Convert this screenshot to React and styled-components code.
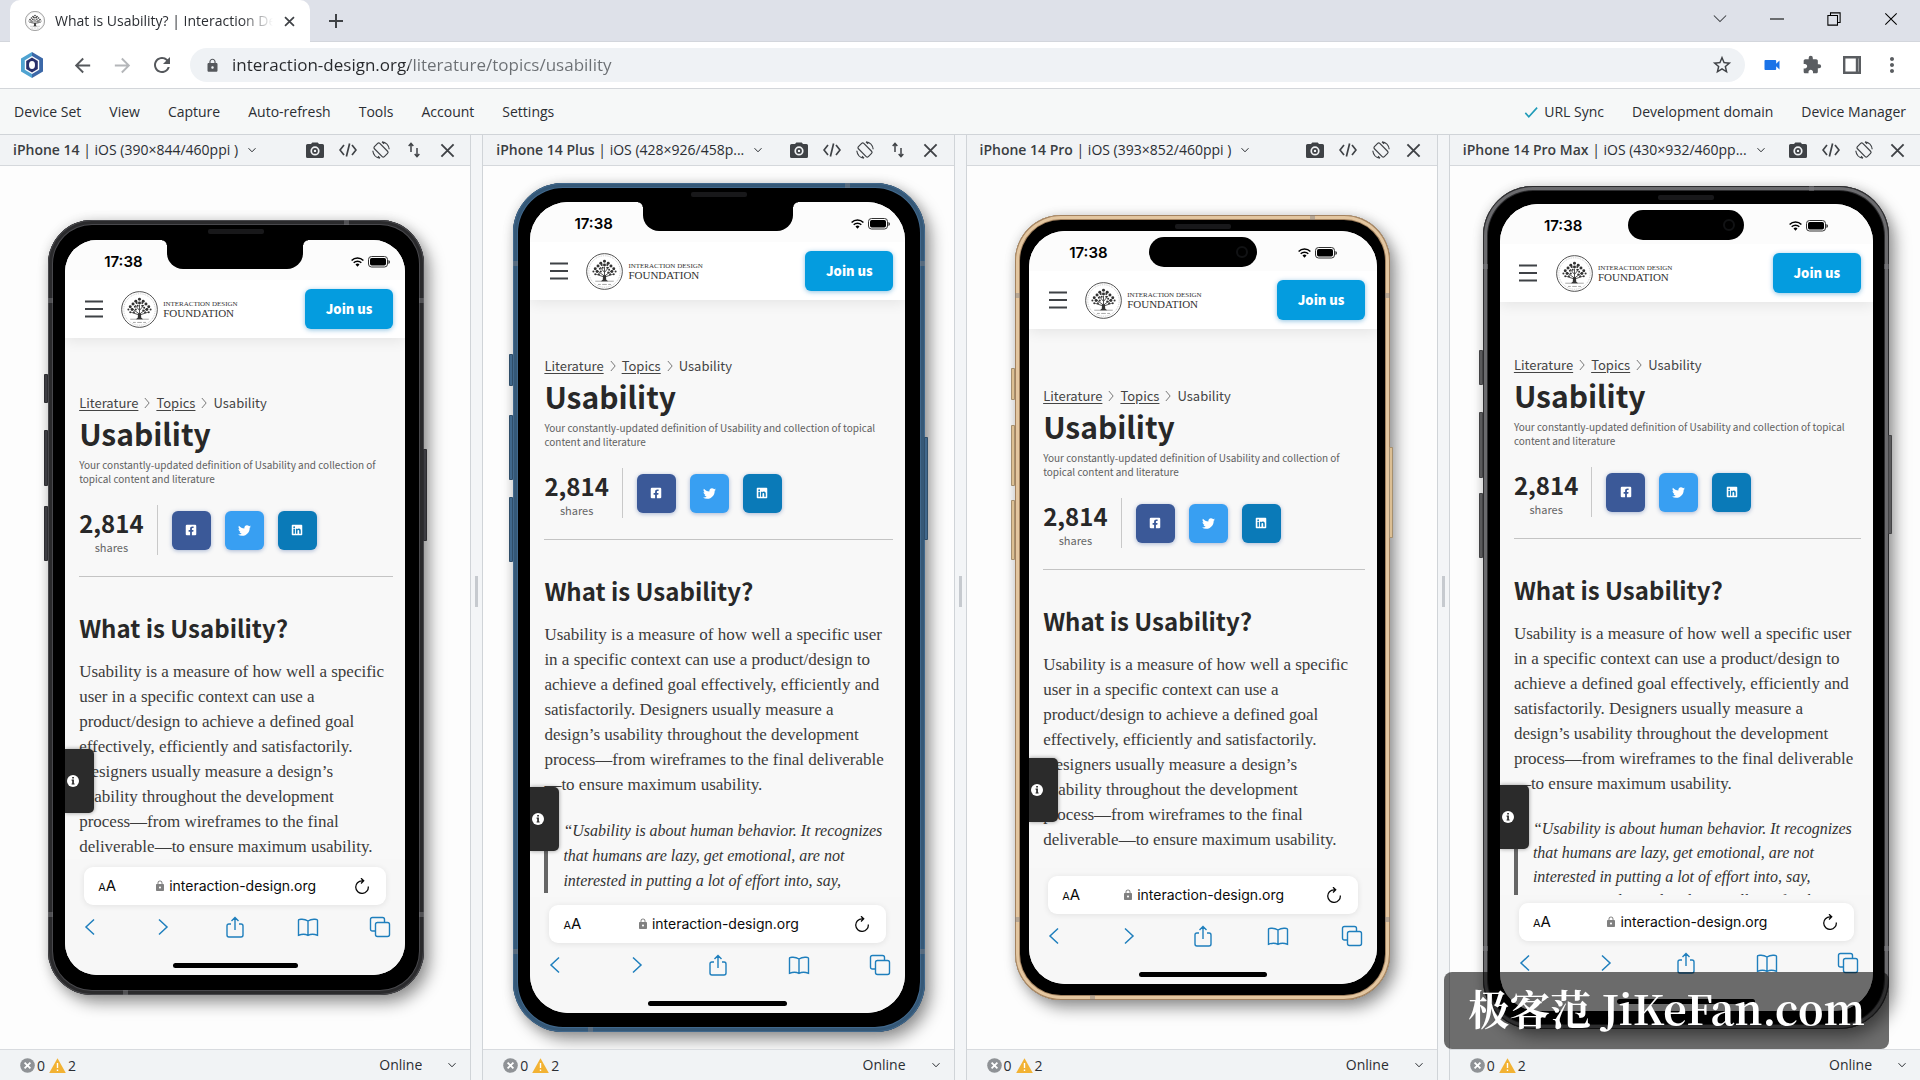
import React from "react";
import styled, { createGlobalStyle, css } from "styled-components";
import {
  MdArrowBack,
  MdArrowForward,
  MdExtension,
  MdLock,
  MdMoreVert,
  MdRefresh,
  MdStarBorder,
  MdVideocam
} from "react-icons/md";
import { FaFacebookSquare, FaLinkedin, FaTwitter } from "react-icons/fa";

const uiFont = `"Open Sans", "Noto Sans", sans-serif`;
const siteFont = `"Noto Sans CJK SC", "Noto Sans", sans-serif`;
const bookFont = `"Liberation Serif", serif`;
const iosFont = `Inter, "Liberation Sans", sans-serif`;

const GlobalStyle = createGlobalStyle`
  *, *::before, *::after {
    box-sizing: border-box;
  }
  body {
    margin: 0;
    font-family: ${uiFont};
    font-size: 14px;
    color: #2b2e33;
    background: #fdfdfd;
  }
  h1, h2, p, blockquote {
    margin: 0;
  }
  button {
    padding: 0;
    border: 0;
    background: none;
    font: inherit;
    color: inherit;
    cursor: pointer;
  }
  svg {
    display: block;
    flex: none;
  }
`;

const narrowPara = [
  "Usability is a measure of how well a specific",
  "user in a specific context can use a",
  "product/design to achieve a defined goal",
  "effectively, efficiently and satisfactorily.",
  "Designers usually measure a design’s",
  "usability throughout the development",
  "process—from wireframes to the final",
  "deliverable—to ensure maximum usability."
];

const widePara = [
  "Usability is a measure of how well a specific user",
  "in a specific context can use a product/design to",
  "achieve a defined goal effectively, efficiently and",
  "satisfactorily. Designers usually measure a",
  "design’s usability throughout the development",
  "process—from wireframes to the final deliverable",
  "—to ensure maximum usability."
];

const quote = [
  "“Usability is about human behavior. It recognizes",
  "that humans are lazy, get emotional, are not",
  "interested in putting a lot of effort into, say,"
];

const narrowIntro = [
  "Your constantly-updated definition of Usability and collection of",
  "topical content and literature"
];

const wideIntro = [
  "Your constantly-updated definition of Usability and collection of topical",
  "content and literature"
];

const devices = [
  {
    name: "iPhone 14",
    spec: "iOS (390×844/460ppi )",
    swap: true,
    width: 340,
    height: 735,
    bezel: "20px 19px 20px 17px",
    radius: 44,
    screenRadius: 32,
    edge: "#48484c",
    rim: "#2a2a2c",
    metal: "#3d3d42",
    notch: 136,
    timeLeft: 39,
    statusRight: 15,
    keys: [[154, 29], [210, 56], [286, 55]],
    power: [229, 92],
    gap: 57,
    home: 125,
    intro: narrowIntro,
    para: narrowPara
  },
  {
    name: "iPhone 14 Plus",
    spec: "iOS (428×926/458p...",
    swap: true,
    width: 375,
    height: 811,
    bezel: "19px 20px 19px 17px",
    radius: 50,
    screenRadius: 38,
    edge: "#41688c",
    rim: "#355877",
    metal: "#41688c",
    notch: 150,
    timeLeft: 44,
    statusRight: 15,
    keys: [[171, 32], [232, 65], [314, 65]],
    power: [254, 103],
    gap: 58,
    home: 139,
    intro: wideIntro,
    para: widePara,
    quote,
    quoteLeading: 25
  },
  {
    name: "iPhone 14 Pro",
    spec: "iOS (393×852/460ppi )",
    width: 348,
    height: 753,
    bezel: "16px 13px 16px 14px",
    radius: 46,
    screenRadius: 36,
    edge: "#a3825f",
    rim: "#e3c6a0",
    metal: "#dcbf93",
    island: 108,
    timeLeft: 40,
    statusRight: 40,
    keys: [[153, 32], [210, 61], [285, 60]],
    power: [232, 91],
    gap: 59,
    home: 128,
    intro: narrowIntro,
    para: narrowPara
  },
  {
    name: "iPhone 14 Pro Max",
    spec: "iOS (430×932/460pp...",
    width: 373,
    height: 807,
    bezel: "18px 16px 18px 17px",
    radius: 50,
    screenRadius: 38,
    edge: "#2c2c2e",
    rim: "#6b6b6e",
    metal: "#5a5a5c",
    island: 116,
    timeLeft: 44,
    statusRight: 45,
    keys: [[164, 35], [226, 66], [307, 65]],
    power: [249, 99],
    gap: 55,
    home: 138,
    intro: wideIntro,
    para: widePara,
    quote: [...quote, "getting a credit card and generally prefer things"],
    quoteLeading: 24
  }
];

/* ---------- browser chrome ---------- */

const Window = styled.div`
  display: flex;
  flex-direction: column;
  min-height: 100vh;
`;

const TabStrip = styled.header`
  display: flex;
  align-items: flex-end;
  height: 42px;
  padding: 0 17px 0 10px;
  background: #dee1e9;
  box-shadow: inset 0 -1px #d3d6dc;
`;

const Tab = styled.div`
  position: relative;
  display: flex;
  align-items: center;
  gap: 10px;
  width: 300px;
  height: 42px;
  padding: 0 15px;
  border-radius: 10px 10px 0 0;
  background: #fff;
`;

const TabTitle = styled.span`
  flex: 1;
  overflow: hidden;
  white-space: nowrap;
  font-size: 14px;
  line-height: 20px;
  mask-image: linear-gradient(90deg, #000 85%, transparent);
`;

const IconButton = styled.button`
  display: flex;
  align-items: center;
  justify-content: center;
  flex: none;
  width: ${p => p.$w || 24}px;
  height: 24px;
  color: ${p => p.$color || "#3f4246"};
`;

const NewTab = styled(IconButton)`
  margin: 0 auto 9px 14px;
`;

const WindowControls = styled.div`
  display: flex;
  gap: 33px;
  align-self: center;
  padding-bottom: 5px;
`;

const Toolbar = styled.div`
  display: flex;
  align-items: center;
  height: 47px;
  padding: 0 16px 0 20px;
  border-bottom: 1px solid #d3d6da;
  background: #fff;
`;

const NavButtons = styled.div`
  display: flex;
  gap: 16px;
  margin: 0 16px 0 26px;
`;

const Omnibox = styled.label`
  display: flex;
  flex: 1;
  align-items: center;
  gap: 12px;
  height: 34px;
  padding: 0 11px 0 15px;
  border-radius: 17px;
  background: #eff2f5;
  color: #55585c;
`;

/* the host part of the address is darker than its path */
const Address = styled.input`
  flex: 1;
  min-width: 0;
  padding: 0;
  border: 0;
  outline: 0;
  font: 17px/24px ${uiFont};
  background: linear-gradient(90deg, #26282b 177px, #6b6f73 177px);
  background-clip: text;
  -webkit-text-fill-color: transparent;
`;

const Extensions = styled.div`
  display: flex;
  gap: 16px;
  margin-left: 15px;
`;

const MenuBar = styled.nav`
  display: flex;
  align-items: center;
  gap: 28px;
  height: 46px;
  padding: 0 14px;
  border-bottom: 1px solid #d0d4d8;
  background: #f6f8f8;
  font-size: 14px;
`;

const MenuItem = styled.button`
  display: flex;
  align-items: center;
  gap: 6px;
  line-height: 24px;
  ${p => p.$push && "margin-left: auto;"}
`;

/* ---------- panels ---------- */

const Panels = styled.main`
  display: flex;
  flex: 1;
`;

const Panel = styled.section`
  display: flex;
  flex: 1 1 0;
  flex-direction: column;
  min-width: 0;
  border: solid #d0d4d8;
  border-width: 0 1px;
  &:first-child {
    border-left: 0;
  }
  &:last-child {
    border-right: 0;
  }
`;

const Splitter = styled.div`
  display: flex;
  flex: 0 0 11px;
  align-items: center;
  justify-content: center;
  padding-bottom: 32px;
  background: #f3f5f7;
  &::before {
    content: "";
    width: 3px;
    height: 31px;
    background: #c6cacf;
  }
`;

const PanelHeader = styled.div`
  display: flex;
  align-items: center;
  height: 31px;
  padding: 0 11px 0 13px;
  border-bottom: 1px solid #d5d8dc;
  background: #f1f3f5;
`;

const DeviceName = styled.button`
  display: flex;
  align-items: center;
  gap: 10px;
  margin-right: auto;
  white-space: nowrap;
  font-size: 14px;
  line-height: 22px;
  b {
    font-weight: 600;
    color: #3a3d41;
  }
`;

const PanelTools = styled.div`
  display: flex;
  gap: 9px;
`;

const Stage = styled.div`
  display: flex;
  flex: 1;
  align-items: center;
  justify-content: center;
  padding-left: 2px;
  overflow: hidden;
  background: #fdfdfd;
`;

const PanelFooter = styled.footer`
  display: flex;
  align-items: center;
  height: 31px;
  padding: 0 14px 0 20px;
  border-top: 1px solid #d8dbdf;
  background: #f1f3f5;
  font-size: 14px;
`;

const Count = styled.span`
  display: flex;
  align-items: center;
  gap: 2px;
  margin-right: 4px;
`;

const Network = styled.label`
  display: flex;
  align-items: center;
  gap: 26px;
  margin-left: auto;
`;

const NetworkSelect = styled.select`
  appearance: none;
  padding: 0;
  border: 0;
  background: none;
  font: inherit;
  line-height: 20px;
  color: inherit;
`;

/* ---------- phone ---------- */

const Body = styled.div`
  position: relative;
  padding: ${p => p.$d.bezel};
  border-radius: ${p => p.$d.radius}px;
  background: #000;
  box-shadow: inset 0 0 0 1px ${p => p.$d.edge}, inset 0 0 0 4px ${p => p.$d.rim},
    inset 0 0 0 5px ${p => p.$d.edge}, 6px 8px 16px rgba(0, 0, 0, 0.4),
    0 0 12px rgba(0, 0, 0, 0.12);
`;

const Key = styled.span`
  position: absolute;
  top: ${p => p.$top}px;
  ${p => (p.$right ? "right: -3px;" : "left: -4px;")}
  width: 4px;
  height: ${p => p.$height}px;
  border-radius: 1px;
  background: ${p => p.$color};
  box-shadow: inset 0 0 0 1px rgba(0, 0, 0, 0.25);
`;

const Antenna = styled.span`
  position: absolute;
  width: 5px;
  height: 5px;
  background: rgba(128, 128, 132, 0.45);
  ${p => p.$at}
`;

const Speaker = styled.span`
  position: absolute;
  top: 9px;
  left: 50%;
  width: 56px;
  height: 5px;
  margin-left: -28px;
  border-radius: 2px;
  background: #18181a;
`;

const Screen = styled.div`
  position: relative;
  display: flex;
  flex-direction: column;
  width: ${p => p.$d.width}px;
  height: ${p => p.$d.height}px;
  overflow: hidden;
  border-radius: ${p => p.$d.screenRadius}px;
  background: #f8f8f8;
`;

const Cutout = styled.span`
  position: absolute;
  z-index: 2;
  left: 50%;
  transform: translateX(-50%);
  background: #000;
  ${p =>
    p.$island
      ? css`
          top: 6px;
          width: ${p.$island}px;
          height: 30px;
          border-radius: 15px;
          &::after {
            content: "";
            position: absolute;
            top: 9px;
            right: 9px;
            width: 12px;
            height: 12px;
            border: 2px solid #111214;
            border-radius: 50%;
          }
        `
      : css`
          top: 0;
          width: ${p.$notch}px;
          height: 29px;
          border-radius: 0 0 16px 16px;
          &::before,
          &::after {
            content: "";
            position: absolute;
            top: 0;
            left: -5px;
            width: 5px;
            height: 5px;
            background: radial-gradient(circle at 0 100%, transparent 4px, #000 5px);
          }
          &::after {
            left: auto;
            right: -5px;
            background: radial-gradient(circle at 100% 100%, transparent 4px, #000 5px);
          }
        `}
`;

const StatusBar = styled.div`
  display: flex;
  flex: none;
  align-items: center;
  gap: 4px;
  height: 40px;
  padding: 4px ${p => p.$d.statusRight}px 0 ${p => p.$d.timeLeft}px;
  background: #fcfcfc;
  color: #000;
  font: 600 15px/16px ${iosFont};
`;

const Time = styled.time`
  margin-right: auto;
`;

const Page = styled.div`
  position: relative;
  flex: 1;
  min-height: 0;
  overflow: hidden;
`;

const SiteHeader = styled.div`
  position: relative;
  display: flex;
  align-items: center;
  height: 58px;
  padding: 0 12px 0 19px;
  background: #fff;
  box-shadow: 0 2px 14px rgba(0, 0, 0, 0.09);
`;

const Logo = styled.a`
  display: flex;
  align-items: center;
  gap: 5px;
  margin: 0 auto 0 18px;
  color: #333;
  text-decoration: none;
`;

const LogoText = styled.span`
  display: flex;
  flex-direction: column;
  font-family: ${bookFont};
  font-size: 11px;
  line-height: 10px;
  small {
    font-size: 7px;
    line-height: 8px;
  }
`;

const JoinButton = styled.button`
  width: 88px;
  height: 40px;
  border-radius: 6px;
  background: #049cdf;
  box-shadow: 0 1px 5px rgba(4, 120, 190, 0.45);
  color: #fff;
  font: 900 13px/20px ${siteFont};
`;

const Article = styled.article`
  padding: ${p => p.$gap}px 12px 0 14px;
  font-family: ${siteFont};
  white-space: nowrap;
`;

const Breadcrumb = styled.nav`
  display: flex;
  align-items: center;
  gap: 4px;
  font-size: 13px;
  line-height: 16px;
  color: #444;
  a {
    color: inherit;
    text-underline-offset: 2px;
  }
`;

const Title = styled.h1`
  margin-top: 6px;
  font-size: 30px;
  line-height: 32px;
  color: #282828;
`;

const Intro = styled.p`
  margin-top: 9px;
  font-size: 10px;
  line-height: 14px;
  color: #606060;
`;

const ShareRow = styled.div`
  display: flex;
  align-items: center;
  gap: 14px;
  margin-top: 19px;
  padding-bottom: 21px;
  border-bottom: 1px solid #c4c4c4;
`;

const Shares = styled.div`
  padding-right: 13px;
  border-right: 1px solid #c9c9c9;
  font-size: 11px;
  line-height: 15px;
  text-align: center;
  color: #666;
  strong {
    display: block;
    font-size: 24px;
    line-height: 35px;
    color: #282828;
  }
`;

const ShareButton = styled.button`
  display: flex;
  align-items: center;
  justify-content: center;
  width: 39px;
  height: 39px;
  border-radius: 6px;
  background: ${p => p.$color};
  box-shadow: 0 1px 4px rgba(20, 60, 140, 0.35);
  color: #fff;
`;

const Heading = styled.h2`
  margin-top: 36px;
  font-size: 24px;
  line-height: 30px;
  color: #282828;
`;

const Paragraph = styled.p`
  margin-top: 16px;
  font: 17px/25px ${bookFont};
  color: #3c3c3c;
`;

const Quote = styled.blockquote`
  margin-top: 21px;
  padding-left: 15px;
  border-left: 4px solid #666;
  font: italic 16px ${bookFont};
  line-height: ${p => p.$leading}px;
  color: #333;
`;

const InfoTab = styled.button`
  position: absolute;
  bottom: 46px;
  left: 0;
  display: flex;
  align-items: center;
  width: 29px;
  height: 64px;
  padding-left: 2px;
  border-radius: 0 5px 5px 0;
  background: #2b2b2b;
  box-shadow: 0 0 4px rgba(0, 0, 0, 0.4);
`;

const Safari = styled.div`
  display: flex;
  flex: none;
  flex-direction: column;
  align-items: center;
  height: 116px;
  padding-top: 8px;
  background: #f7f7f7;
`;

const UrlPill = styled.div`
  display: flex;
  align-items: center;
  justify-content: space-between;
  align-self: stretch;
  height: 38px;
  margin: 0 19px;
  padding: 0 16px 0 14px;
  border-radius: 9px;
  background: #fff;
  box-shadow: 0 1px 6px rgba(0, 0, 0, 0.09);
  color: #0a0a0a;
`;

const TextSize = styled.button`
  font: 15px/20px ${iosFont};
  small {
    font-size: 11px;
  }
`;

const Host = styled.button`
  display: flex;
  align-items: center;
  gap: 3px;
  font: 14px/20px ${iosFont};
`;

const SafariNav = styled.div`
  display: flex;
  justify-content: space-between;
  align-self: stretch;
  padding: 11px 14px 0;
`;

const SafariButton = styled.button`
  display: flex;
  align-items: center;
  justify-content: center;
  width: 22px;
  height: 22px;
  color: #1f7fbd;
`;

const HomeBar = styled.span`
  width: ${p => p.$width}px;
  height: 5px;
  margin-top: 25px;
  border-radius: 3px;
  background: #000;
`;

const Watermark = styled.aside`
  position: fixed;
  z-index: 5;
  right: 31px;
  bottom: 31px;
  height: 77px;
  padding: 8px 24px 0;
  border-radius: 8px;
  background: rgba(0, 0, 0, 0.57);
  color: #fff;
  font: 700 41px/56px "Noto Serif CJK SC", "Liberation Serif", "Noto Sans CJK SC", serif;
`;

/* ---------- drawings ---------- */

const Line = ({ size = 16, box = 16, width = 1.5, d, ...rest }) => (
  <svg
    width={size}
    height={size}
    viewBox={`0 0 ${box} ${box}`}
    fill="none"
    stroke="currentColor"
    strokeWidth={width}
    {...rest}
  >
    <path d={d} />
  </svg>
);

const Chevron = () => <Line size={8} box={8} width={1} d="M.5 2.2 4 5.8 7.5 2.2" />;

const CloseIcon = ({ size = 15, width = 2 }) => (
  <Line size={size} width={width} d="M1.5 1.5l13 13M14.5 1.5l-13 13" />
);

const CameraIcon = () => (
  <svg width="18" height="16" viewBox="0 0 18 16">
    <path
      fill="currentColor"
      fillRule="evenodd"
      d="M5 2 6.300.4h5.4L13 2h3.500q1.500 0 1.500 1.500v11q0 1.500-1.500 1.500h-15Q0 16 0 14.500v-11Q0 2 1.500 2zM9 4.300a4.600 4.600 0 1 0 0 9.200 4.600 4.600 0 0 0 0-9.200zM9 6a2.900 2.900 0 1 1 0 5.800A2.900 2.900 0 0 1 9 6zM9 7.700a1.200 1.200 0 1 0 0 2.400 1.200 1.200 0 0 0 0-2.400z"
    />
  </svg>
);

const CodeIcon = () => (
  <Line size={18} box={18} width={1.7} d="M5 4 1 9l4 5M13 4l4 5-4 5M10.600 2.500l-3.200 13" />
);

const RotateIcon = () => (
  <svg width="18" height="18" viewBox="0 0 18 18" fill="none" stroke="currentColor" strokeWidth="1.200">
    <rect x="5.200" y="2" width="7.600" height="14" rx="1.500" transform="rotate(-45 9 9)" />
    <path d="M10 .8a8.300 8.300 0 0 1 7.200 7.400M8 17.200A8.300 8.300 0 0 1 .8 9.800M10 .8l2 2M8 17.200l-2-2" />
  </svg>
);

const SwapIcon = () => (
  <svg width="12" height="16" viewBox="0 0 12 16" fill="none" stroke="currentColor" strokeWidth="1.500">
    <path d="M3 10V1.500M.7 4 3 1.300 5.300 4M9 6v8.500M6.700 12 9 14.700l2.300-2.700" />
  </svg>
);

const HexLogo = () => (
  <svg width="24" height="26" viewBox="0 0 24 26">
    <path fill="#4fa3d1" d="M12 0 1 6.500v13L12 26z" />
    <path fill="#3c68a8" d="M12 0l11 6.500v13L12 26z" />
    <path fill="#fff" d="M12 4 4.800 8.200v9.600l7.200 4.200 7.200-4.200V8.200z" />
    <path fill="#28306b" d="M12 5.500 6.200 9v8l5.800 3.500 5.800-3.500V9z" />
    <ellipse cx="12" cy="13" rx="3" ry="4" fill="#fff" />
  </svg>
);

const leaves = [
  [20, 9, 2], [16, 11, 2], [24, 11, 2], [13, 14, 2], [20, 13, 2], [27, 14, 2],
  [10, 17, 2], [15, 17, 1], [18, 16, 1], [23, 16, 1], [25, 18, 1], [30, 17, 2],
  [8, 20, 1], [12, 20, 2], [16, 20, 1], [24, 21, 1], [28, 20, 2], [32, 20, 1],
  [10, 23, 1], [14, 23, 1], [26, 23, 1], [30, 23, 1], [17, 13, 1], [23, 13, 1]
];

const TreeLogo = ({ size = 37 }) => (
  <svg width={size} height={size} viewBox="0 0 40 40" fill="none" stroke="#444">
    <circle cx="20" cy="20" r="19.300" strokeWidth="1" />
    <circle cx="20" cy="20" r="17" strokeWidth=".3" strokeDasharray="1 1" />
    <path strokeWidth="1" d="M20 28V15M20 25l-8-6M20 25l8-6M20 21l-5-6M20 21l5-6M20 26l-9-3M20 26l9-3" />
    <path fill="#333" stroke="none" d="M18.500 24h3l.4 5 2 1.500h-7.800l2-1.500z" />
    <g fill="#333" stroke="none">
      {leaves.map(([x, y, r]) => (
        <circle key={`${x}-${y}`} cx={x} cy={y} r={r * 0.5 + 0.6} />
      ))}
    </g>
    <path strokeWidth=".5" d="M10 30.500h20M13 34h3M17.500 34h5M24 34h3" />
  </svg>
);

const WifiIcon = () => (
  <svg width="13" height="10" viewBox="0 0 13 10" fill="none" stroke="#000" strokeWidth="1.500">
    <path d="M.6 3.500a8.400 8.400 0 0 1 11.800 0M2.700 5.700a5.400 5.400 0 0 1 7.600 0" />
    <path fill="#000" stroke="none" d="M4.500 7.500a2.800 2.800 0 0 1 4 0l-2 2.200z" />
  </svg>
);

const BatteryIcon = () => (
  <svg width="22" height="12" viewBox="0 0 22 12">
    <rect x=".5" y=".5" width="19" height="10.500" rx="3" fill="none" stroke="#333" />
    <rect x="2" y="2" width="16" height="7.500" rx="1.700" />
    <path d="M20.500 4v4q1.300-.6 1.300-2t-1.300-2z" />
  </svg>
);

const ErrorIcon = () => (
  <svg width="15" height="15" viewBox="0 0 15 15">
    <circle cx="7.500" cy="7.500" r="7.300" fill="#8f9296" />
    <path stroke="#fff" strokeWidth="1.800" d="M4.600 4.600l5.800 5.800M10.400 4.600l-5.800 5.800" />
  </svg>
);

const WarnIcon = () => (
  <svg width="17" height="15" viewBox="0 0 17 15">
    <path fill="#f2b233" d="M8.500.3 16.800 15H.2z" />
    <path stroke="#fff" strokeWidth="1.400" d="M8.500 5v5M8.500 11.500V13" />
  </svg>
);

const InfoIcon = () => (
  <svg width="12" height="12" viewBox="0 0 12 12">
    <circle cx="6" cy="6" r="6" fill="#fff" />
    <path fill="#2b2b2b" d="M5.200 2h1.700v1.600H5.200zM4.600 4.600h2.300v3.800h.7v1.200h-3V8.400h.6V5.800h-.6z" />
  </svg>
);

const ReloadIcon = () => (
  <Line size={16} box={16} width={1.3} d="M14.300 8.500A6.300 6.300 0 1 1 8 2.800h1.500M7 .2l2.700 2.600L7 5.500" />
);

/* ---------- parts ---------- */

const Lines = ({ text }) =>
  text.map((line, i) => (
    <React.Fragment key={line}>
      {i > 0 && <br />}
      {line}
    </React.Fragment>
  ));

const Crumb = () => <Line size={10} box={14} width={1} d="M4 0l6 7-6 7" />;

const Phone = ({ device }) => (
  <Body $d={device}>
    {device.keys.map(([top, height]) => (
      <Key key={top} $top={top} $height={height} $color={device.metal} />
    ))}
    <Key $right $top={device.power[0]} $height={device.power[1]} $color={device.metal} />
    <Antenna $at="top: 0; right: 75px;" />
    <Antenna $at="top: 78px; left: 0;" />
    <Antenna $at="top: 78px; right: 0;" />
    <Antenna $at="bottom: 78px; left: 0;" />
    <Antenna $at="bottom: 78px; right: 0;" />
    <Antenna $at="bottom: 0; left: 75px;" />
    <Speaker />
    <Screen $d={device}>
      <Cutout $notch={device.notch} $island={device.island} />
      <StatusBar $d={device}>
        <Time>17:38</Time>
        <WifiIcon />
        <BatteryIcon />
      </StatusBar>
      <Page>
        <SiteHeader>
          <IconButton $w={19} aria-label="Menu">
            <Line size={18} box={18} width={1.8} d="M0 1.500h18M0 9h18M0 16.500h18" />
          </IconButton>
          <Logo href="#home">
            <TreeLogo />
            <LogoText>
              <small>INTERACTION DESIGN</small>
              FOUNDATION
            </LogoText>
          </Logo>
          <JoinButton>Join us</JoinButton>
        </SiteHeader>
        <Article $gap={device.gap}>
          <Breadcrumb>
            <a href="#literature">Literature</a>
            <Crumb />
            <a href="#topics">Topics</a>
            <Crumb />
            <span>Usability</span>
          </Breadcrumb>
          <Title>Usability</Title>
          <Intro>
            <Lines text={device.intro} />
          </Intro>
          <ShareRow>
            <Shares>
              <strong>2,814</strong>
              shares
            </Shares>
            <ShareButton $color="#3b5998" aria-label="Share on Facebook">
              <FaFacebookSquare size={12} />
            </ShareButton>
            <ShareButton $color="#389ff2" aria-label="Share on Twitter">
              <FaTwitter size={13} />
            </ShareButton>
            <ShareButton $color="#0a7ab8" aria-label="Share on LinkedIn">
              <FaLinkedin size={12} />
            </ShareButton>
          </ShareRow>
          <Heading>What is Usability?</Heading>
          <Paragraph>
            <Lines text={device.para} />
          </Paragraph>
          {device.quote && (
            <Quote $leading={device.quoteLeading}>
              <Lines text={device.quote} />
            </Quote>
          )}
        </Article>
        <InfoTab aria-label="Information">
          <InfoIcon />
        </InfoTab>
      </Page>
      <Safari>
        <UrlPill>
          <TextSize>
            <small>A</small>A
          </TextSize>
          <Host>
            <MdLock size={12} color="#808080" />
            interaction-design.org
          </Host>
          <button aria-label="Reload">
            <ReloadIcon />
          </button>
        </UrlPill>
        <SafariNav>
          <SafariButton aria-label="Back">
            <Line size={18} box={18} d="M13 1.500 5 9l8 7.500" />
          </SafariButton>
          <SafariButton aria-label="Forward">
            <Line size={18} box={18} d="M5 1.500 13 9l-8 7.500" />
          </SafariButton>
          <SafariButton aria-label="Share">
            <Line size={22} box={22} width={1.4} d="M7 8H5q-2 0-2 2v9q0 2 2 2h12q2 0 2-2v-9q0-2-2-2h-2M11 14V1.500M7.500 5 11 1.500 14.500 5" />
          </SafariButton>
          <SafariButton aria-label="Bookmarks">
            <Line size={22} box={22} width={1.4} d="M11 5Q8 3 4 3.300q-2.500.2-2.500 1v15Q7 17 11 19.500 15 17 20.500 19.300v-15q0-.8-2.500-1Q14 3 11 5zM11 5v14" />
          </SafariButton>
          <SafariButton aria-label="Tabs">
            <Line size={22} box={22} width={1.4} d="M8 6.500h10.500q2 0 2 2v10q0 2-2 2h-10q-2 0-2-2V8.500q0-2 2-2M6 15H3.500q-2 0-2-2V3.500q0-2 2-2h10q2 0 2 2V6" />
          </SafariButton>
        </SafariNav>
        <HomeBar $width={device.home} />
      </Safari>
    </Screen>
  </Body>
);

const DevicePanel = ({ device }) => (
  <Panel>
    <PanelHeader>
      <DeviceName>
        <span>
          <b>{device.name}</b> | {device.spec}
        </span>
        <Chevron />
      </DeviceName>
      <PanelTools>
        <IconButton aria-label="Screenshot"><CameraIcon /></IconButton>
        <IconButton aria-label="Inspect"><CodeIcon /></IconButton>
        <IconButton aria-label="Rotate"><RotateIcon /></IconButton>
        {device.swap && <IconButton aria-label="Scroll sync"><SwapIcon /></IconButton>}
        <IconButton aria-label="Close device"><CloseIcon /></IconButton>
      </PanelTools>
    </PanelHeader>
    <Stage>
      <Phone device={device} />
    </Stage>
    <PanelFooter>
      <Count><ErrorIcon />0</Count>
      <Count><WarnIcon />2</Count>
      <Network>
        <NetworkSelect aria-label="Network">
          <option>Online</option>
        </NetworkSelect>
        <Chevron />
      </Network>
    </PanelFooter>
  </Panel>
);

const menus = ["Device Set", "View", "Capture", "Auto-refresh", "Tools", "Account", "Settings"];

const App = () => (
  <Window>
    <GlobalStyle />
    <TabStrip>
      <Tab>
        <TreeLogo size={20} />
        <TabTitle>What is Usability? | Interaction Design</TabTitle>
        <IconButton $w={12} aria-label="Close tab"><CloseIcon size={11} width={2.5} /></IconButton>
      </Tab>
      <NewTab aria-label="New tab">
        <Line width={2} d="M8 1v14M1 8h14" />
      </NewTab>
      <WindowControls>
        <IconButton aria-label="Search tabs"><Line size={14} width={1.2} d="M1 4l7 7 7-7" /></IconButton>
        <IconButton $color="#000" aria-label="Minimize"><Line size={14} width={1.2} d="M0 8h16" /></IconButton>
        <IconButton $color="#000" aria-label="Restore">
          <Line size={14} width={1.2} d="M1 4h11v11H1zM4 4V1h11v11h-3" />
        </IconButton>
        <IconButton $color="#000" aria-label="Close"><CloseIcon size={14} width={1.2} /></IconButton>
      </WindowControls>
    </TabStrip>
    <Toolbar>
      <HexLogo />
      <NavButtons>
        <IconButton aria-label="Back"><MdArrowBack size={23} color="#55585c" /></IconButton>
        <IconButton aria-label="Forward"><MdArrowForward size={23} color="#b4b6b9" /></IconButton>
        <IconButton aria-label="Reload"><MdRefresh size={24} color="#55585c" /></IconButton>
      </NavButtons>
      <Omnibox>
        <MdLock size={15} />
        <Address aria-label="Address" defaultValue="interaction-design.org/literature/topics/usability" />
        <IconButton aria-label="Bookmark"><MdStarBorder size={22} /></IconButton>
      </Omnibox>
      <Extensions>
        <IconButton aria-label="Video"><MdVideocam size={20} color="#1a73e8" /></IconButton>
        <IconButton aria-label="Extensions"><MdExtension size={20} color="#5a5d61" /></IconButton>
        <IconButton aria-label="Side panel">
          <Line size={18} box={18} width={2.4} color="#5a5d61" d="M1.200 1.200h15.600v15.600H1.200zM14 1.200v15.600" />
        </IconButton>
        <IconButton aria-label="More"><MdMoreVert size={24} color="#5a5d61" /></IconButton>
      </Extensions>
    </Toolbar>
    <MenuBar>
      {menus.map(menu => (
        <MenuItem key={menu}>{menu}</MenuItem>
      ))}
      <MenuItem $push>
        <Line size={14} width={1.8} color="#1f9bb8" d="M1.500 9l4 4.500L15 3" />
        URL Sync
      </MenuItem>
      <MenuItem>Development domain</MenuItem>
      <MenuItem>Device Manager</MenuItem>
    </MenuBar>
    <Panels>
      {devices.map((device, i) => (
        <React.Fragment key={device.name}>
          {i > 0 && <Splitter />}
          <DevicePanel device={device} />
        </React.Fragment>
      ))}
    </Panels>
    <Watermark>极客范 JiKeFan.com</Watermark>
  </Window>
);

export default App;
